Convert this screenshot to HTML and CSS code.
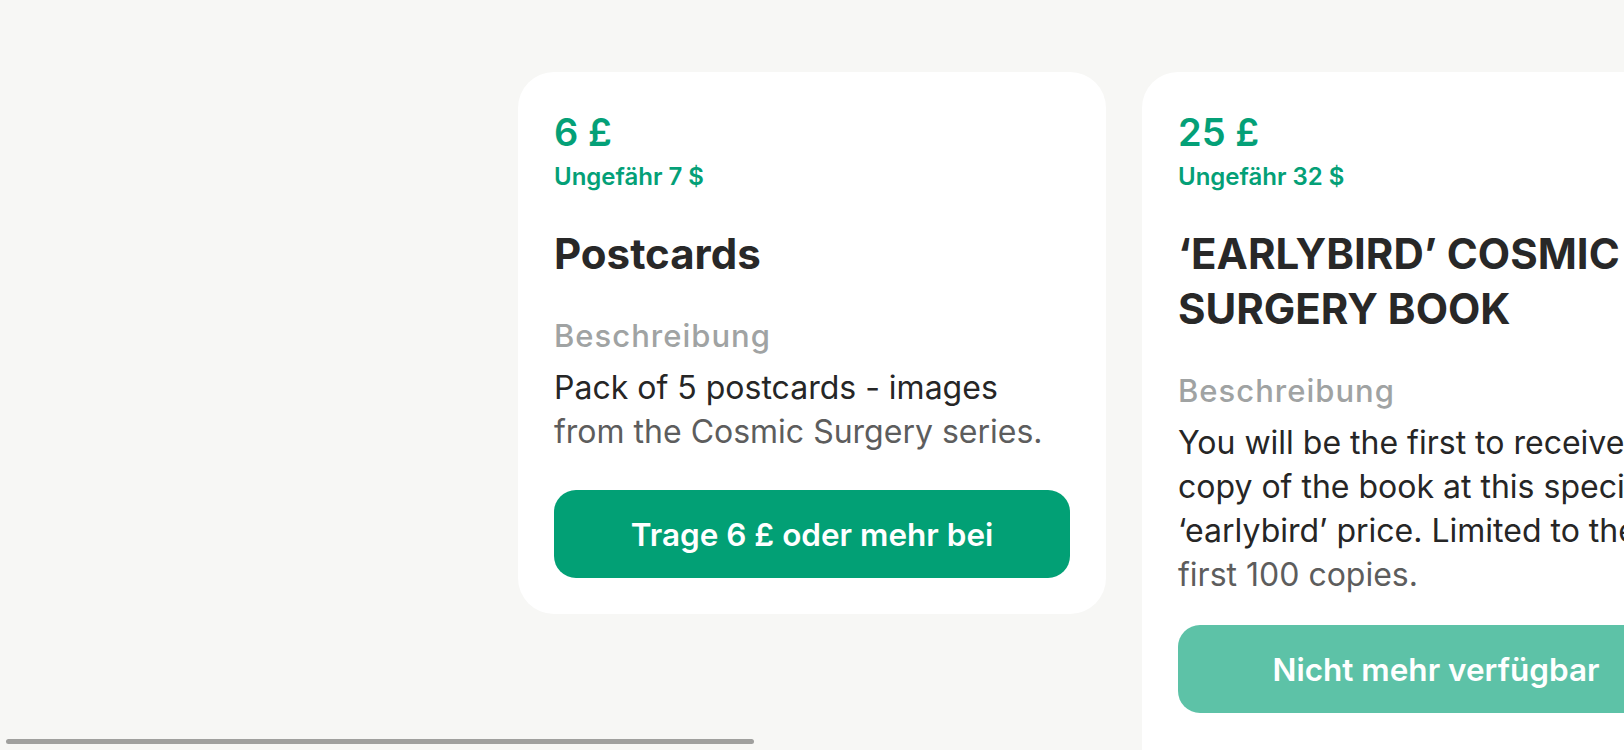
FILE: index.html
```html
<!DOCTYPE html>
<html lang="de">
<head>
<meta charset="utf-8">
<title>Belohnungen</title>
<link rel="stylesheet" href="styles.css">
</head>
<body>
<main class="rewards">
  <div class="carousel">
    <article class="card">
      <div class="price">6 £</div>
      <div class="approx">Ungefähr 7 $</div>
      <h2 class="title">Postcards</h2>
      <div class="label">Beschreibung</div>
      <p class="desc desc--short">
        <span class="line">Pack of 5 postcards - images</span>
        <span class="line line--fade">from the Cosmic Surgery series.</span>
      </p>
      <button class="cta">Trage 6 £ oder mehr bei</button>
    </article>
    <article class="card card--tall">
      <div class="price">25 £</div>
      <div class="approx">Ungefähr 32 $</div>
      <h2 class="title">‘EARLYBIRD’ COSMIC SURGERY BOOK</h2>
      <div class="label">Beschreibung</div>
      <p class="desc">
        <span class="line">You will be the first to receive a</span>
        <span class="line">copy of the book at this special</span>
        <span class="line">‘earlybird’ price. Limited to the</span>
        <span class="line line--fade">first 100 copies.</span>
      </p>
      <button class="cta cta--disabled" disabled>Nicht mehr verfügbar</button>
    </article>
  </div>
  <div class="scroll-indicator"></div>
</main>
</body>
</html>
```
FILE: styles.css
```css
* { box-sizing: border-box; }

html, body {
  margin: 0;
  padding: 0;
  height: 750px;
  overflow: hidden;
  background: #f7f7f5;
  font-family: Inter, "Noto Sans", "Liberation Sans", sans-serif;
}

.rewards {
  position: relative;
  height: 750px;
  overflow: hidden;
}

.carousel {
  display: flex;
  align-items: flex-start;
  gap: 36px;
  padding: 72px 0 0 518px;
}

.card {
  flex: 0 0 588px;
  background: #ffffff;
  border-radius: 36px;
  padding: 36px;
  display: flex;
  flex-direction: column;
}

.card--tall {
  padding-bottom: 140px;
}

.price {
  font-size: 38px;
  line-height: 48px;
  font-weight: 600;
  color: #04a077;
}

.approx {
  margin-top: 6px;
  font-size: 24px;
  line-height: 30px;
  font-weight: 600;
  color: #04a077;
}

.title {
  margin: 34px 0 0;
  font-size: 42px;
  line-height: 55px;
  font-weight: 700;
  color: #282828;
}

.label {
  margin-top: 37px;
  font-size: 31px;
  line-height: 36px;
  font-weight: 500;
  letter-spacing: 1px;
  color: #a0a3a3;
}

.desc {
  margin: 12px 0 28px;
  font-size: 32px;
  line-height: 44px;
  font-weight: 400;
  color: #262626;
}

.desc--short {
  margin-bottom: 36px;
}

.line {
  display: block;
  white-space: nowrap;
}

.line--fade {
  color: #5d5d5d;
}

.cta {
  display: flex;
  align-items: center;
  justify-content: center;
  height: 88px;
  width: 100%;
  border: 0;
  border-radius: 22px;
  background: #02a075;
  color: #ffffff;
  font-family: inherit;
  font-size: 31.5px;
  font-weight: 600;
  padding: 0;
}

.cta--disabled {
  background: #5dc2a7;
}

.scroll-indicator {
  position: absolute;
  left: 6px;
  top: 739px;
  width: 748px;
  height: 5px;
  border-radius: 3px;
  background: #a0a09e;
}
```
